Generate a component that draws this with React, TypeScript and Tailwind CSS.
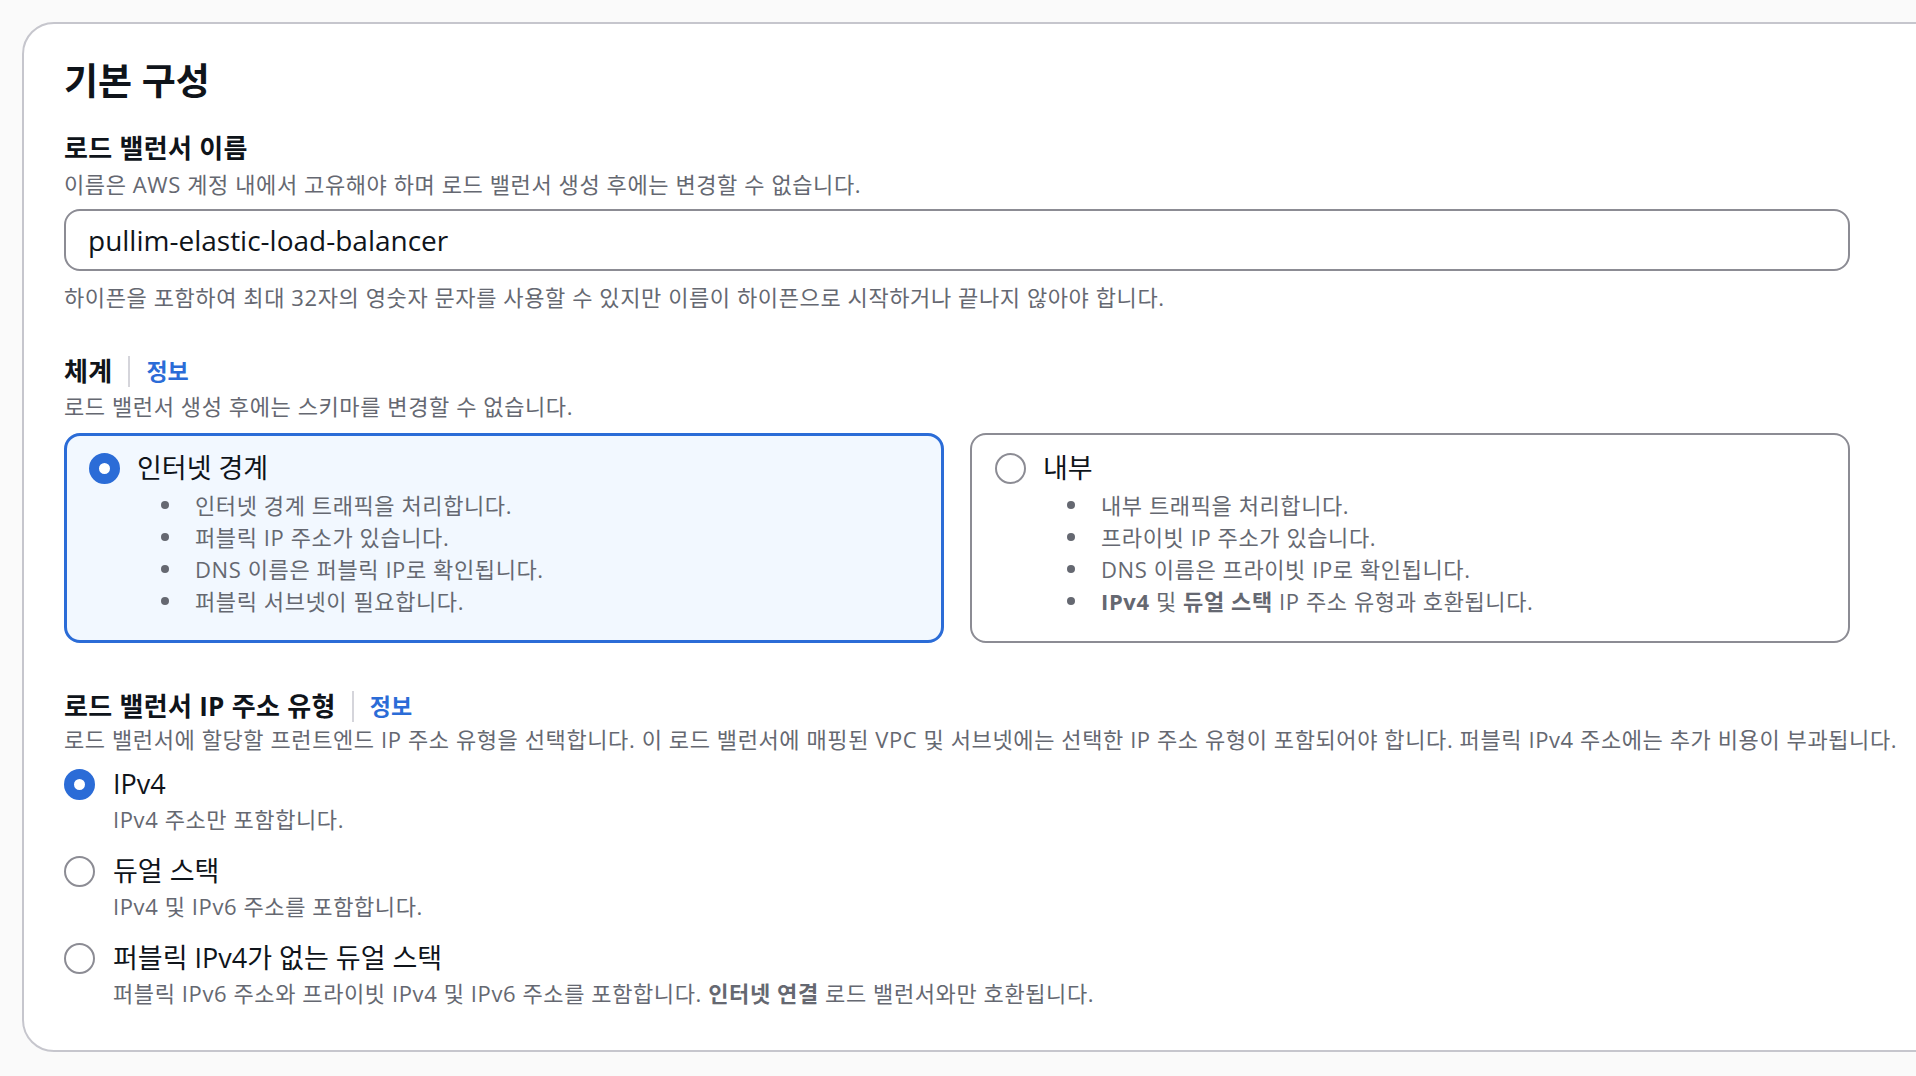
import React from "react";

function Radio({ on }: { on?: boolean }) {
  return (
    <span
      className={
        on
          ? "block w-[31px] h-[31px] shrink-0 rounded-full border-[10px] border-[#2b6cd7] bg-white"
          : "block w-[31px] h-[31px] shrink-0 rounded-full border-2 border-[#8c8c94] bg-white"
      }
    />
  );
}

function FieldLabel({ text, info }: { text: string; info?: boolean }) {
  return (
    <div className="flex items-center h-[32px] gap-4">
      <span className="text-[26px] font-bold leading-[32px] tracking-[0.3px] text-[#0f141a] whitespace-nowrap">{text}</span>
      {info && (
        <>
          <span className="w-[2px] h-[31px] bg-[#d5d5db]" />
          <a className="text-[23px] font-bold leading-[32px] text-[#2b6cd7]">정보</a>
        </>
      )}
    </div>
  );
}

function Desc({ children, className = "" }: { children: React.ReactNode; className?: string }) {
  return (
    <p className={"text-[22px] leading-[30px] tracking-[0.6px] text-[#656871] whitespace-nowrap " + className}>
      {children}
    </p>
  );
}

function Bullet({ children }: { children: React.ReactNode }) {
  return (
    <li className="flex items-center pl-[72px] h-[32px] text-[22px] leading-[32px] tracking-[0.6px] text-[#656871] whitespace-nowrap">
      <span className="w-2 h-2 rounded-full bg-[#656871] shrink-0" />
      <span className="ml-[26px]">{children}</span>
    </li>
  );
}

function SchemeCard({ title, items, on }: { title: string; items: React.ReactNode[]; on?: boolean }) {
  return (
    <div
      className={
        on
          ? "rounded-[16px] border-[3px] border-[#2b6cd7] bg-[#f2f8ff] pt-[15px] pb-[23px] pl-[22px]"
          : "rounded-[16px] border-2 border-[#8c8c94] bg-white pt-[16px] pb-[24px] pl-[23px]"
      }
    >
      <div className="flex items-center h-[34px]">
        <Radio on={on} />
        <span className="ml-[17px] text-[27px] leading-[34px] text-[#0f141a]">{title}</span>
      </div>
      <ul className="mt-[4px]">
        {items.map((it, i) => (
          <Bullet key={i}>{it}</Bullet>
        ))}
      </ul>
    </div>
  );
}

function IpOption({ title, desc, on }: { title: string; desc: React.ReactNode; on?: boolean }) {
  return (
    <div>
      <div className="flex items-center h-[34px]">
        <Radio on={on} />
        <span className="ml-[18px] text-[27px] leading-[34px] text-[#0f141a] whitespace-nowrap">{title}</span>
      </div>
      <Desc className="mt-[3px] pl-[49px]">{desc}</Desc>
    </div>
  );
}

export default function App() {
  return (
    <div className="min-h-screen w-full overflow-hidden bg-[#fafafa] pt-[22px] pl-[22px] font-['Open_Sans','Noto_Sans_CJK_KR',sans-serif]">
      <section className="w-[1960px] rounded-[32px] border-2 border-[#c6c6cd] bg-white pl-[40px] pt-[35px] pb-[42px]">
        <h2 className="text-[37px] font-bold leading-[44px] text-[#0f141a]">기본 구성</h2>

        <div className="mt-[29px]">
          <FieldLabel text="로드 밸런서 이름" />
        </div>
        <Desc className="mt-[5px]">이름은 AWS 계정 내에서 고유해야 하며 로드 밸런서 생성 후에는 변경할 수 없습니다.</Desc>
        <div className="mt-[10px] w-[1786px] h-[62px] rounded-[16px] border-2 border-[#8c8c94] flex items-center pl-[22px] text-[28px] text-[#0f141a]">
          pullim-elastic-load-balancer
        </div>
        <Desc className="mt-[11px]">
          하이픈을 포함하여 최대 32자의 영숫자 문자를 사용할 수 있지만 이름이 하이픈으로 시작하거나 끝나지 않아야 합니다.
        </Desc>

        <div className="mt-[43px]">
          <FieldLabel text="체계" info />
        </div>
        <Desc className="mt-[4px]">로드 밸런서 생성 후에는 스키마를 변경할 수 없습니다.</Desc>
        <div className="mt-[12px] w-[1786px] grid grid-cols-2 gap-[26px]">
          <SchemeCard
            on
            title="인터넷 경계"
            items={[
              "인터넷 경계 트래픽을 처리합니다.",
              "퍼블릭 IP 주소가 있습니다.",
              "DNS 이름은 퍼블릭 IP로 확인됩니다.",
              "퍼블릭 서브넷이 필요합니다.",
            ]}
          />
          <SchemeCard
            title="내부"
            items={[
              "내부 트래픽을 처리합니다.",
              "프라이빗 IP 주소가 있습니다.",
              "DNS 이름은 프라이빗 IP로 확인됩니다.",
              <>
                <b>IPv4</b> 및 <b>듀얼 스택</b> IP 주소 유형과 호환됩니다.
              </>,
            ]}
          />
        </div>

        <div className="mt-[47px]">
          <FieldLabel text="로드 밸런서 IP 주소 유형" info />
        </div>
        <Desc className="mt-[2px]">
          로드 밸런서에 할당할 프런트엔드 IP 주소 유형을 선택합니다. 이 로드 밸런서에 매핑된 VPC 및 서브넷에는 선택한 IP 주소 유형이 포함되어야 합니다. 퍼블릭 IPv4 주소에는 추가 비용이 부과됩니다.
        </Desc>
        <div className="mt-[13px] flex flex-col gap-[20px]">
          <IpOption on title="IPv4" desc="IPv4 주소만 포함합니다." />
          <IpOption title="듀얼 스택" desc="IPv4 및 IPv6 주소를 포함합니다." />
          <IpOption
            title="퍼블릭 IPv4가 없는 듀얼 스택"
            desc={
              <>
                퍼블릭 IPv6 주소와 프라이빗 IPv4 및 IPv6 주소를 포함합니다. <b>인터넷 연결</b> 로드 밸런서와만 호환됩니다.
              </>
            }
          />
        </div>
      </section>
    </div>
  );
}
